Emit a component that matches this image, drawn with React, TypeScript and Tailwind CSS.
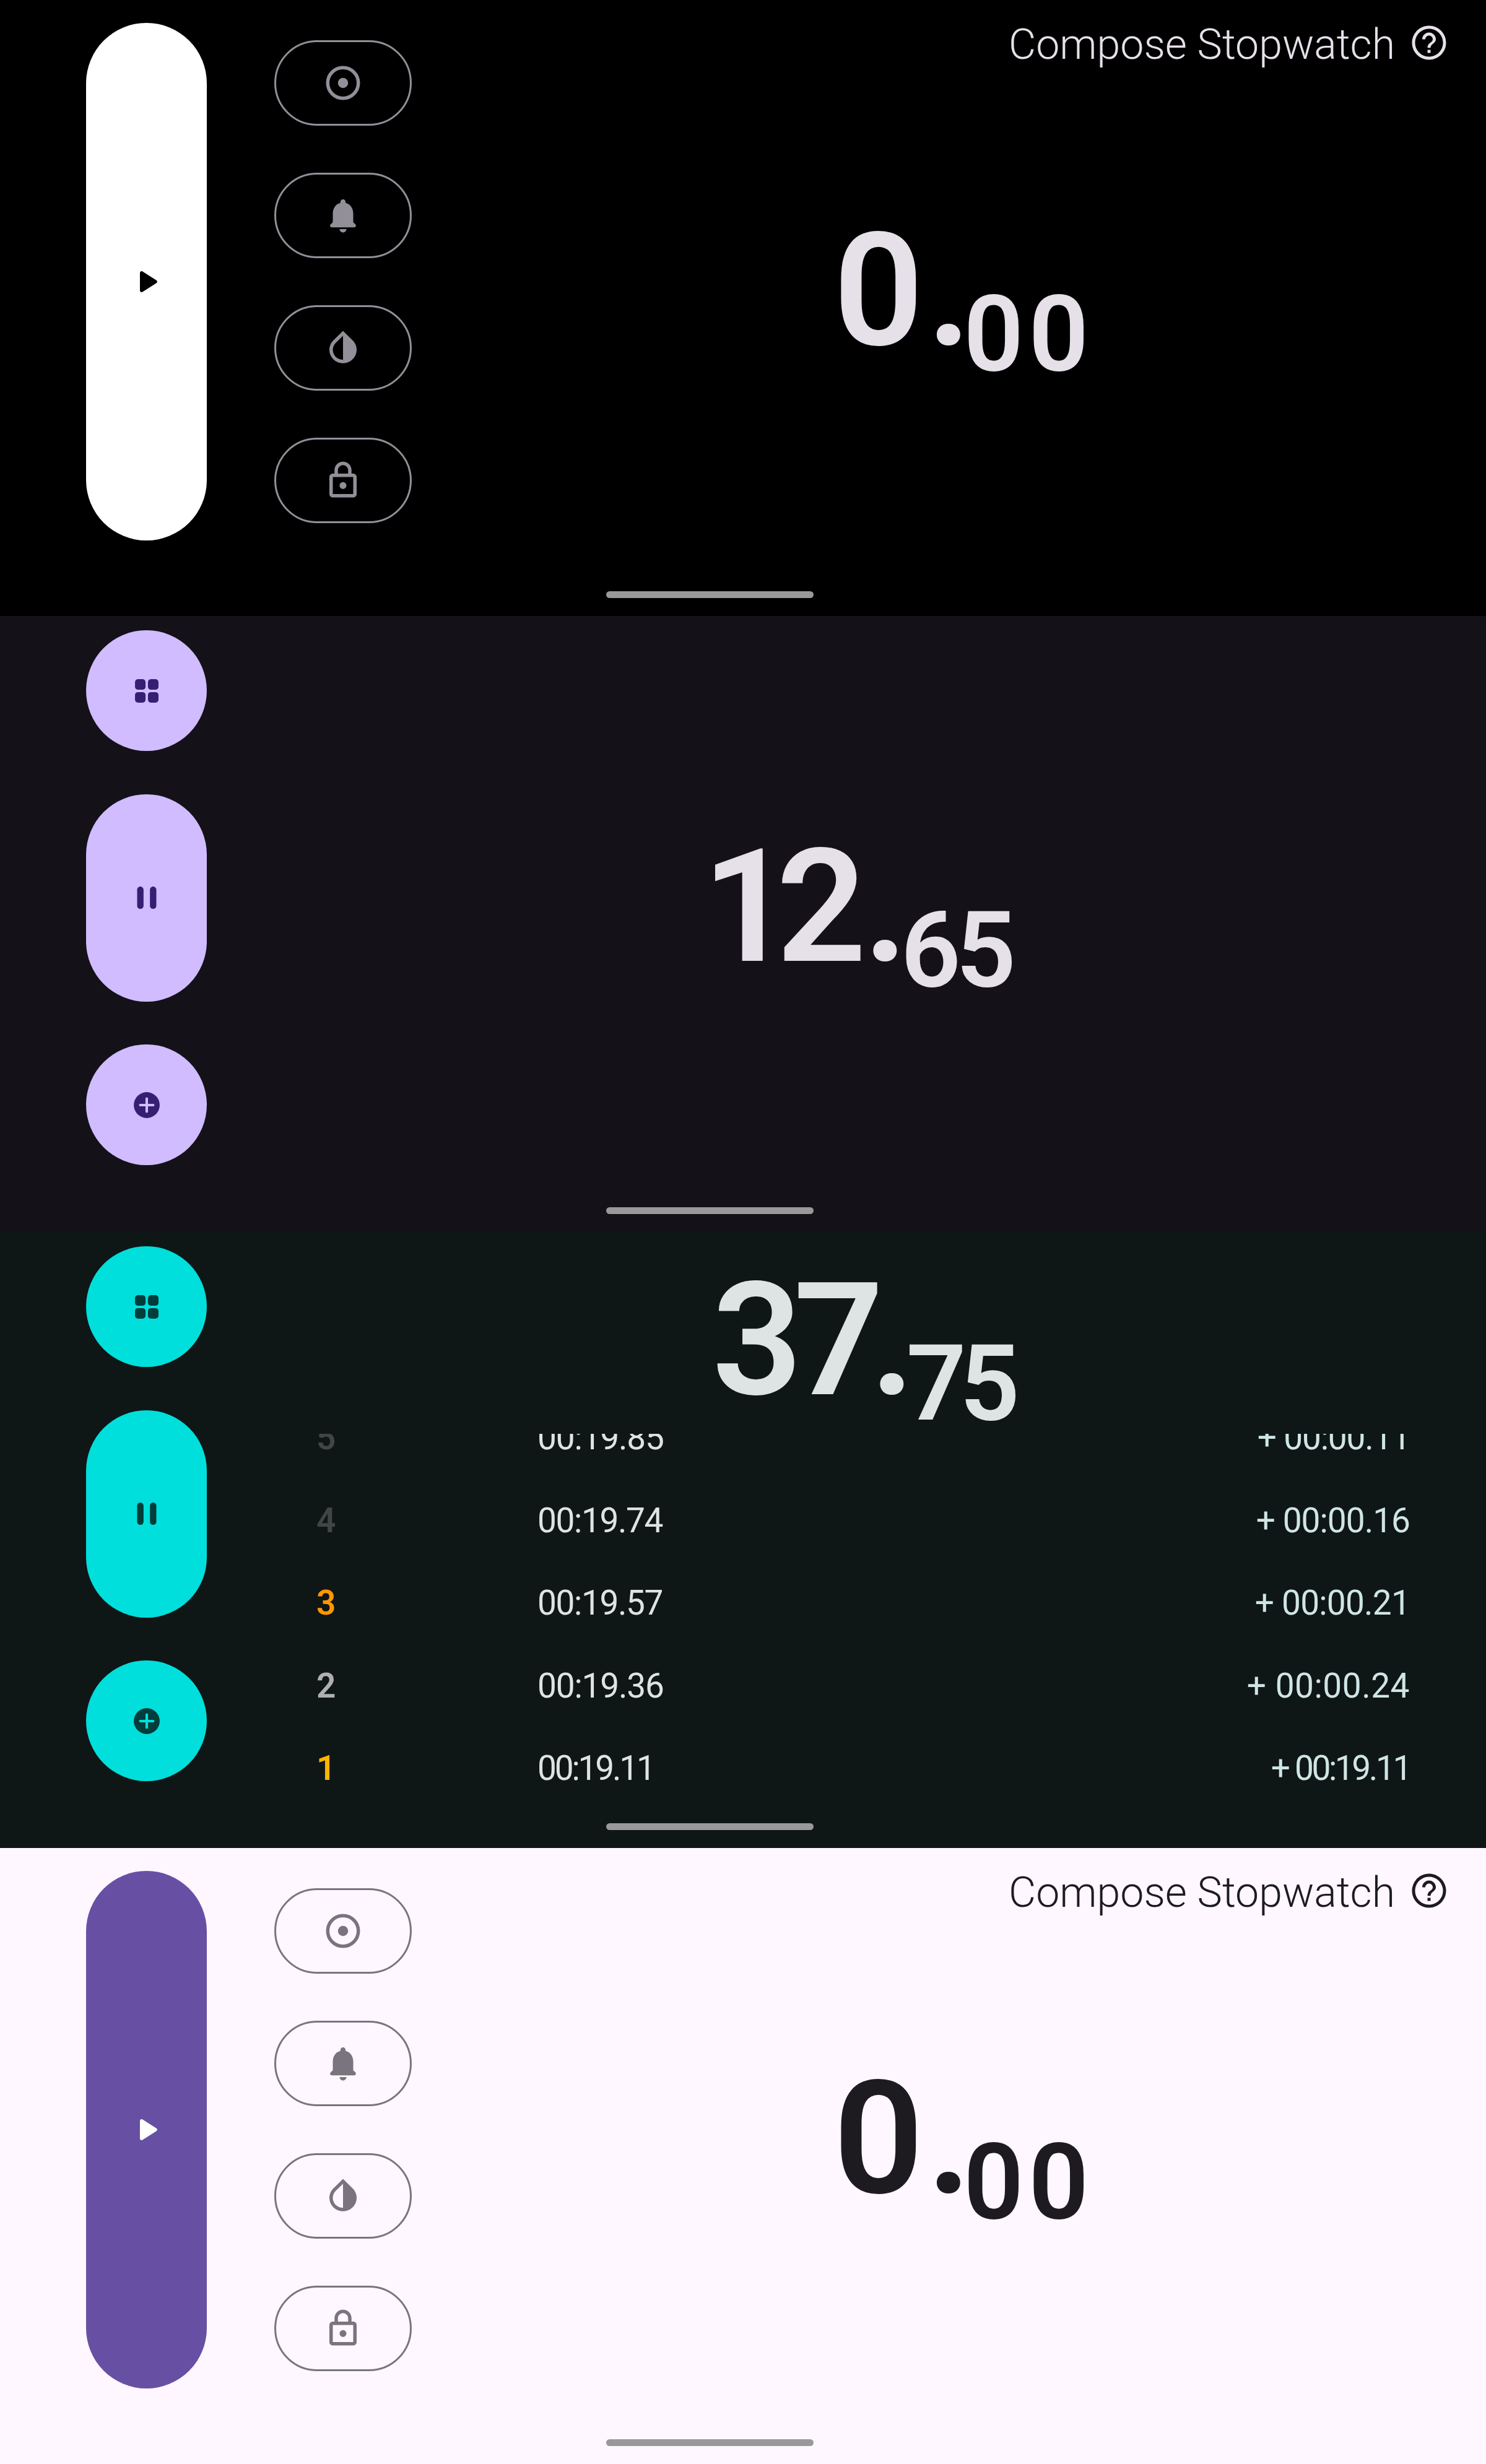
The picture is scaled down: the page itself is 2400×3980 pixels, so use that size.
const PLAY = "M8 6.82v10.36c0 .79.87 1.27 1.54.84l8.14-5.18c.62-.39.62-1.29 0-1.69L9.54 5.98C8.87 5.55 8 6.03 8 6.82z";
const PAUSE = "M8 19c1.1 0 2-.9 2-2V7c0-1.1-.9-2-2-2s-2 .9-2 2v10c0 1.1.9 2 2 2zm6-12v10c0 1.1.9 2 2 2s2-.9 2-2V7c0-1.1-.9-2-2-2s-2 .9-2 2z";
const BELL = "M12 22c1.1 0 2-.9 2-2h-4c0 1.1.9 2 2 2zm6-6v-5c0-3.07-1.63-5.64-4.5-6.32V4c0-.83-.67-1.5-1.5-1.5s-1.5.67-1.5 1.5v.68C7.64 5.36 6 7.92 6 11v5l-1.29 1.29c-.63.63-.19 1.71.7 1.71h13.17c.89 0 1.34-1.08.71-1.71L18 16z";
const DROP = "M12 2 6.35 7.56C4.9 9.02 4 10.96 4 13.13 4 17.48 7.58 21 12 21s8-3.52 8-7.87c0-2.17-.9-4.11-2.35-5.57L12 2zm0 2.81V19c-3.31 0-6-2.63-6-5.87 0-1.56.62-3.03 1.75-4.14L12 4.81z";
const LOCK = "M18 8h-1V6c0-2.76-2.24-5-5-5S7 3.24 7 6v2H6c-1.1 0-2 .9-2 2v10c0 1.1.9 2 2 2h12c1.1 0 2-.9 2-2V10c0-1.1-.9-2-2-2zM9 6c0-1.66 1.34-3 3-3s3 1.34 3 3v2H9V6zm9 14H6V10h12v10zm-6-3c1.1 0 2-.9 2-2s-.9-2-2-2-2 .9-2 2 .9 2 2 2z";

function Icon({ d, size = 66 }: { d: string; size?: number }) {
  return (
    <svg width={size} height={size} viewBox="0 0 24 24" fill="currentColor" fillRule="evenodd">
      <path d={d} />
    </svg>
  );
}

function RadioIcon() {
  return (
    <svg width={66} height={66} viewBox="0 0 24 24" fill="none">
      <circle cx="12" cy="12" r="9" stroke="currentColor" strokeWidth="2" />
      <circle cx="12" cy="12" r="3" fill="currentColor" />
    </svg>
  );
}

function GridIcon() {
  return (
    <svg width={66} height={66} viewBox="0 0 24 24" fill="currentColor">
      <rect x="5.1" y="5.1" width="6.2" height="6.2" rx="1.8" />
      <rect x="12.7" y="5.1" width="6.2" height="6.2" rx="1.8" />
      <rect x="5.1" y="12.7" width="6.2" height="6.2" rx="1.8" />
      <rect x="12.7" y="12.7" width="6.2" height="6.2" rx="1.8" />
    </svg>
  );
}

function LapIcon({ plus }: { plus: string }) {
  return (
    <svg width={66} height={66} viewBox="0 0 24 24" fill="none">
      <circle cx="12" cy="12" r="7.6" fill="currentColor" />
      <path d="M12 8.2v7.6M8.2 12h7.6" stroke={plus} strokeWidth="1.5" strokeLinecap="round" />
    </svg>
  );
}

function HelpIcon() {
  return (
    <svg width={66} height={66} viewBox="0 0 24 24" fill="currentColor" fillRule="evenodd">
      <path d="M12 2C6.48 2 2 6.48 2 12s4.48 10 10 10 10-4.48 10-10S17.52 2 12 2zm0 18.2c-4.53 0-8.2-3.67-8.2-8.2S7.47 3.8 12 3.8s8.2 3.67 8.2 8.2-3.67 8.2-8.2 8.2z" />
      <path d="M11.1 16.2h1.8V18h-1.8zM12 6c-2.2 0-4 1.8-4 4h1.8c0-1.2 1-2.2 2.2-2.2s2.2 1 2.2 2.2c0 2-3.1 1.8-3.1 5h1.8c0-2.3 3.1-2.6 3.1-5 0-2.2-1.8-4-4-4z" />
    </svg>
  );
}

// the reference's digits are proportional, Roboto's are tabular, so each clock gets its own spacing
function Clock({ whole, cents, wholeCls, dotCls, centsCls }: { whole: string; cents: string; wholeCls: string; dotCls: string; centsCls: string }) {
  return (
    <p className="text-[255px] leading-none font-semibold whitespace-nowrap">
      <span className={wholeCls}>{whole}</span>
      <span className={`tracking-[-4px] ${dotCls}`}>.</span>
      <span className={`align-[-41px] text-[170px] ${centsCls}`}>{cents}</span>
    </p>
  );
}

function HomeBar() {
  return <div className="absolute left-[979px] bottom-[29px] h-[11px] w-[335px] rounded-full bg-[#999999]" />;
}

function IdlePanel({ panel, pill, onPill, text, outline }: { panel: string; pill: string; onPill: string; text: string; outline: string }) {
  const actions = [<RadioIcon key="r" />, <Icon key="b" d={BELL} />, <Icon key="d" d={DROP} />, <Icon key="l" d={LOCK} />];
  return (
    <section className={`relative flex h-[995px] overflow-hidden ${panel}`}>
      <div className="ml-[139px] pt-[37px]">
        <div className={`flex h-[836px] w-[195px] items-center justify-center rounded-full ${pill} ${onPill}`}>
          <Icon d={PLAY} />
        </div>
      </div>
      <div className={`ml-[109px] flex flex-col gap-[76px] pt-[65px] ${outline}`}>
        {actions.map((icon, i) => (
          <div key={i} className="flex h-[138px] w-[222px] items-center justify-center rounded-full border-[3px] border-current">
            {icon}
          </div>
        ))}
      </div>
      <div className={`flex-1 ${text}`}>
        <div className="flex h-[110px] items-start justify-end gap-[22px] pr-[59px] pt-[36px]">
          <span className="mt-[2px] text-[68px] font-[350] leading-none">Compose Stopwatch</span>
          <HelpIcon />
        </div>
        <div className="pl-[681px] pt-[232px]">
          <Clock
            whole="0"
            cents="00"
            wholeCls="tracking-[-6px]"
            dotCls="ml-[11px]"
            centsCls="ml-[-9px] tracking-[8px]"
          />
        </div>
      </div>
      <HomeBar />
    </section>
  );
}

function RunningRail({ bg, fg, plus }: { bg: string; fg: string; plus: string }) {
  return (
    <div className={`ml-[139px] flex w-[195px] flex-col gap-[69.5px] pt-[23px] ${fg}`}>
      <div className={`flex h-[195px] items-center justify-center rounded-full ${bg}`}>
        <GridIcon />
      </div>
      <div className={`flex h-[335px] items-center justify-center rounded-full ${bg}`}>
        <Icon d={PAUSE} size={62} />
      </div>
      <div className={`flex h-[195px] items-center justify-center rounded-full ${bg}`}>
        <LapIcon plus={plus} />
      </div>
    </div>
  );
}

const laps = [
  { n: "5", color: "text-[#414545]", time: "00:19.85", diff: "+ 00:00.11", timeCls: "tracking-[-1.2px]", diffCls: "tracking-[-1.2px]" },
  { n: "4", color: "text-[#414545]", time: "00:19.74", diff: "+ 00:00.16", timeCls: "tracking-[-1.4px]", diffCls: "tracking-[-1px]" },
  { n: "3", color: "text-[#ff9800]", time: "00:19.57", diff: "+ 00:00.21", timeCls: "tracking-[-1.4px]", diffCls: "tracking-[-0.8px]" },
  { n: "2", color: "text-[#b0b0b0]", time: "00:19.36", diff: "+ 00:00.24", timeCls: "tracking-[-1.2px]", diffCls: "tracking-[0.5px]" },
  { n: "1", color: "text-[#ffb300]", time: "00:19.11", diff: "+ 00:19.11", timeCls: "tracking-[-3.2px]", diffCls: "tracking-[-3.4px]" },
];

export default function App() {
  return (
    <div className="w-[2400px] font-[Roboto,sans-serif]">
      <IdlePanel panel="bg-black" pill="bg-white" onPill="text-black" text="text-[#e6e0e9]" outline="text-[#938f99]" />

      <section className="relative flex h-[995px] overflow-hidden bg-[#141218] text-[#e6e0e9]">
        <RunningRail bg="bg-[#d0bcff]" fg="text-[#381e72]" plus="#d0bcff" />
        <div className="flex-1 pl-[800px] pt-[342px]">
          <Clock
            whole="12"
            cents="65"
            wholeCls="tracking-[-26px]"
            dotCls="ml-[21px]"
            centsCls="ml-[-8px] tracking-[-8px]"
          />
        </div>
        <HomeBar />
      </section>

      <section className="relative flex h-[995px] overflow-hidden bg-[#0f1616] text-[#dee3e3]">
        <RunningRail bg="bg-[#00dfdb]" fg="text-[#003d3b]" plus="#00dfdb" />
        <div className="flex flex-1 flex-col overflow-hidden">
          <div className="h-[326px] pl-[816px] pt-[47px]">
            <Clock
              whole="37"
              cents="75"
              wholeCls="tracking-[-14px]"
              dotCls="ml-[-8px]"
              centsCls="ml-[-10px] tracking-[-11px]"
            />
          </div>
          <div className="flex-1 overflow-hidden">
            <div className="mt-[-60px] pl-[177px] pr-[123px] text-[55px] leading-none">
              {laps.map((lap) => (
                <div key={lap.n} className="flex h-[133.5px] items-center">
                  <span className={`w-[357px] font-semibold ${lap.color}`}>{lap.n}</span>
                  <span className={`flex-1 ${lap.timeCls}`}>{lap.time}</span>
                  <span className={`text-[#cfe5e4] ${lap.diffCls}`}>{lap.diff}</span>
                </div>
              ))}
            </div>
          </div>
        </div>
        <HomeBar />
      </section>

      <IdlePanel panel="bg-[#fef7ff]" pill="bg-[#6750a4]" onPill="text-white" text="text-[#1d1b20]" outline="text-[#79747e]" />
    </div>
  );
}
